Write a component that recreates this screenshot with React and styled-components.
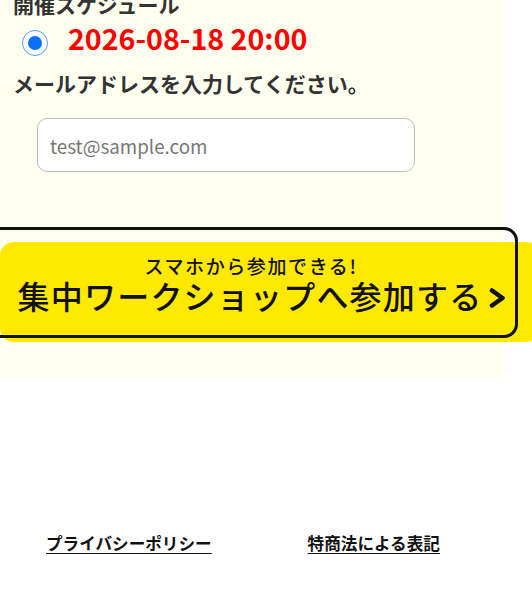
import React from "react";
import styled, { createGlobalStyle } from "styled-components";

const Global = createGlobalStyle`
  html, body { margin: 0; padding: 0; background: #ffffff; }
  body {
    font-family: "Noto Sans CJK JP", "Noto Sans", sans-serif;
    color: #333333;
    overflow-x: hidden;
  }
  * { box-sizing: border-box; }
`;

const Page = styled.div`
  width: 532px;
  overflow: hidden;
`;

const FormArea = styled.section`
  width: 504px;
  height: 383px;
  background: #fffff0;
  padding: 0 13px;
`;

const Heading = styled.h2`
  margin: -6px 0 0;
  font-size: 21px;
  line-height: 21px;
  font-weight: 700;
  color: #333333;
`;

const ScheduleRow = styled.label`
  display: flex;
  align-items: flex-start;
  gap: 20px;
  margin-top: 5px;
  padding-left: 9px;
`;

const Radio = styled.input`
  appearance: none;
  margin: 10px 0 0;
  width: 26px;
  height: 26px;
  border-radius: 50%;
  border: 1.5px solid #5b9cf6;
  background: #ffffff;
  display: grid;
  place-items: center;
  flex: none;
  &::before {
    content: "";
    width: 14px;
    height: 14px;
    border-radius: 50%;
    background: #0b6ff9;
  }
`;

const DateText = styled.span`
  font-size: 28.6px;
  line-height: 36px;
  font-weight: 700;
  color: #ff0000;
`;

const Label = styled.p`
  margin: 13px 0 0;
  font-size: 21px;
  line-height: 28px;
  font-weight: 700;
  color: #333333;
`;

const EmailInput = styled.input`
  display: block;
  margin: 21px 0 0 24px;
  width: 378px;
  height: 54px;
  border: 1px solid #bdbdbd;
  border-radius: 10px;
  background: #ffffff;
  padding: 0 12px;
  font-family: "Noto Sans CJK JP", "Noto Sans", sans-serif;
  font-size: 18.8px;
  color: #333333;
  outline: none;
  &::placeholder { color: #777777; }
`;

const CtaWrap = styled.div`
  margin: 70px 0 0 -13px;
`;

const Cta = styled.a`
  position: relative;
  display: flex;
  flex-direction: column;
  align-items: center;
  width: 540px;
  height: 100px;
  padding: 11px 16px 0 0;
  background: #ffe900;
  border-radius: 14px;
  color: #111111;
  text-decoration: none;
  &::after {
    content: "";
    position: absolute;
    top: 0;
    left: 0;
    transform: translate(-14px, -15px);
    width: 526px;
    height: 105px;
    border: 3px solid #111111;
    border-radius: 14px;
    pointer-events: none;
  }
`;

const CtaSub = styled.span`
  font-size: 19px;
  line-height: 26px;
  font-weight: 500;
  letter-spacing: 1.6px;
  margin-right: 22px;
`;

const CtaMain = styled.span`
  display: flex;
  align-items: center;
  gap: 7px;
  margin-top: -4px;
  font-size: 32px;
  line-height: 40px;
  font-weight: 500;
  letter-spacing: 1.2px;
`;

const Chevron = styled.svg`
  width: 17px;
  height: 20px;
  flex: none;
  margin-top: 6px;
`;

const Footer = styled.footer`
  display: flex;
  gap: 96px;
  padding: 155px 0 0 46px;
`;

const FooterLink = styled.a`
  font-size: 16.6px;
  line-height: 22px;
  font-weight: 700;
  color: #111111;
  text-decoration: underline;
  text-underline-offset: 3px;
`;

export default function App() {
  return (
    <Page>
      <Global />
      <FormArea>
        <Heading>開催スケジュール</Heading>
        <ScheduleRow>
          <Radio type="radio" name="schedule" defaultChecked />
          <DateText>2026-08-18 20:00</DateText>
        </ScheduleRow>
        <Label>メールアドレスを入力してください。</Label>
        <EmailInput type="email" placeholder="test@sample.com" />
        <CtaWrap>
          <Cta href="#">
            <CtaSub>スマホから参加できる!</CtaSub>
            <CtaMain>
              集中ワークショップへ参加する
              <Chevron viewBox="0 0 17 20">
                <polyline
                  points="3,2.5 13.5,10 3,17.5"
                  fill="none"
                  stroke="#111"
                  strokeWidth="4.6"
                  strokeLinecap="round"
                  strokeLinejoin="round"
                />
              </Chevron>
            </CtaMain>
          </Cta>
        </CtaWrap>
      </FormArea>
      <Footer>
        <FooterLink href="#">プライバシーポリシー</FooterLink>
        <FooterLink href="#">特商法による表記</FooterLink>
      </Footer>
    </Page>
  );
}
